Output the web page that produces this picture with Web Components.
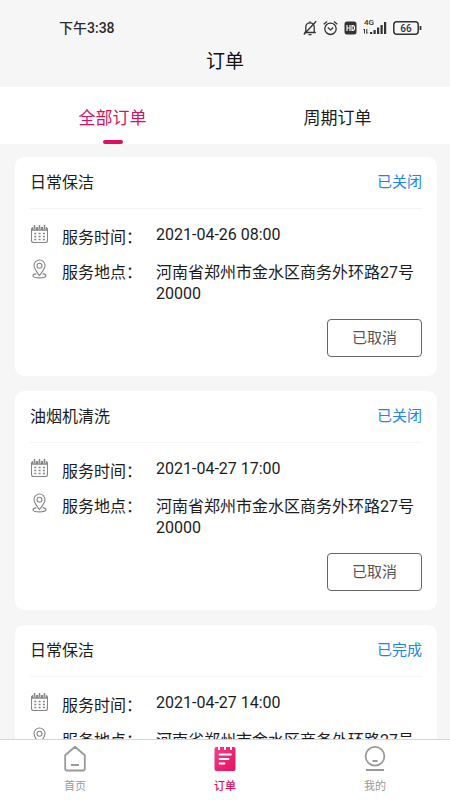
<!DOCTYPE html>
<html lang="zh-CN">
<head>
<meta charset="utf-8">
<meta name="viewport" content="width=device-width, initial-scale=1">
<title>订单</title>
<style>
  html, body { margin: 0; height: 100%; }
  body {
    --accent: #dc0f60;
    --link: #2086ec;
    --page: #f6f6f6;
    font-family: Roboto, "Noto Sans CJK SC", sans-serif;
    font-size: 16px;
    line-height: 21px;
    color: #1c1c1c;
    background: var(--page);
  }
</style>
</head>
<body>
<order-app>
  <status-bar slot="top" time="下午3:38" battery="66"></status-bar>
  <page-title slot="top">订单</page-title>
  <tab-bar slot="top">
    <tab-item active>全部订单</tab-item>
    <tab-item>周期订单</tab-item>
  </tab-bar>

  <order-card name="日常保洁" status="已关闭" time="2021-04-26 08:00">
    河南省郑州市金水区商务外环路27号 20000
    <outline-button slot="action">已取消</outline-button>
  </order-card>
  <order-card name="油烟机清洗" status="已关闭" time="2021-04-27 17:00">
    河南省郑州市金水区商务外环路27号 20000
    <outline-button slot="action">已取消</outline-button>
  </order-card>
  <order-card name="日常保洁" status="已完成" time="2021-04-27 14:00">
    河南省郑州市金水区商务外环路27号 20000
  </order-card>

  <nav-bar slot="bottom">
    <nav-item icon="home">首页</nav-item>
    <nav-item icon="order" active>订单</nav-item>
    <nav-item icon="mine">我的</nav-item>
  </nav-bar>
</order-app>

<script>
const define = (name, render) => customElements.define(name, class extends HTMLElement {
  connectedCallback() {
    if (this.shadowRoot) return;
    const template = document.createElement('template');
    template.innerHTML = render(this);
    this.attachShadow({ mode: 'open' }).append(template.content.cloneNode(true));
  }
});

define('order-app', () => `
  <style>
    :host { display: flex; flex-direction: column; height: 100vh; }
    main {
      flex: 1; min-height: 0; overflow-y: auto; scrollbar-width: none;
      display: flex; flex-direction: column; gap: 15px;
      padding: 13px 13px 15px 15px;
    }
  </style>
  <header><slot name="top"></slot></header>
  <main><slot></slot></main>
  <slot name="bottom"></slot>`);

define('status-bar', el => `
  <style>
    :host {
      display: flex; align-items: center; justify-content: space-between;
      height: 40px; padding: 8px 28px 0 59px;
      font-size: 14px; font-weight: 500; color: #2b2b2b;
    }
    .icons { display: flex; align-items: center; gap: 6px; }
    svg { display: block; fill: none; stroke: #333; stroke-width: 1.3; }
    .hd, .level { stroke: none; fill: #333; }
    .knockout { stroke: var(--page); }
    text { stroke: none; fill: #333; font-weight: 500; }
  </style>
  <time>${el.getAttribute('time')}</time>
  <div class="icons">
    <svg width="14" height="16" viewBox="0 0 14 16">
      <path d="M1.200 12.500h11.600M2.800 12.300V7a4.200 4.200 0 0 1 8.400 0v5.300M7 1.300V3M5.500 14.600h3M.8 14.500L13.200 1.300"/>
    </svg>
    <svg width="15" height="16" viewBox="0 0 15 16">
      <circle cx="7.5" cy="8.8" r="5.700"/>
      <path d="M4.8 7.6l2.7 2.3 2.7-2.3M.7 4.2L4 1.6M14.3 4.2L11 1.6"/>
    </svg>
    <svg width="13" height="14" viewBox="0 0 13 14">
      <rect class="hd" x=".5" y=".5" width="12" height="13" rx="2.5"/>
      <path class="knockout" stroke-width="1.2" d="M3 4v6M6 4v6M3 7h3M8 4.6v4.8h.8q1.700 0 1.700-2.400T8.800 4.600z"/>
    </svg>
    <svg width="24" height="18" viewBox="0 0 24 18">
      <text x="1" y="6" font-size="8">4G</text>
      <path stroke-width="1" d="M1.500 14.500V10M.5 11l1-1M3.800 10v4.500M4.800 13.500l-1 1"/>
      <path class="level" d="M7 13h2.200v2H7zM10.500 11h2.200v4h-2.200zM14 8.500h2.200V15H14zM17.500 6h2.200v9h-2.200zM21 3h2.200v12H21z"/>
    </svg>
    <svg width="29" height="14" viewBox="0 0 29 14">
      <rect x=".8" y=".8" width="24.400" height="12.400" rx="3" stroke-width="1.500"/>
      <path stroke-width="1.800" d="M27.500 5v4"/>
      <text x="13" y="10.500" font-size="10" text-anchor="middle">${el.getAttribute('battery')}</text>
    </svg>
  </div>`);

define('page-title', () => `
  <style>
    :host { display: block; padding: 1px 0 12px; }
    h1 { margin: 0; font-size: 19px; line-height: 26px; font-weight: 400; text-align: center; color: #111; }
  </style>
  <h1><slot></slot></h1>`);

define('tab-bar', () => `
  <style>
    :host { display: block; background: #fff; }
    nav { display: flex; }
  </style>
  <nav><slot></slot></nav>`);

define('tab-item', el => `
  <style>
    :host { flex: 1; display: flex; }
    button {
      flex: 1; display: flex; flex-direction: column; align-items: center; gap: 9px;
      border: 0; padding: 19px 0 0; background: none; cursor: pointer;
      font: inherit; font-size: 17px; line-height: 25px; color: inherit;
    }
    i { width: 20px; height: 4px; border-radius: 2px; }
    :host([active]) button { color: var(--accent); }
    :host([active]) i { background: var(--accent); }
  </style>
  <button type="button" aria-pressed="${el.hasAttribute('active')}"><slot></slot><i></i></button>`);

define('order-card', el => `
  <style>
    :host { display: block; flex: none; padding: 0 15px 19px; border-radius: 9px; background: #fff; }
    header {
      display: flex; align-items: center; justify-content: space-between;
      height: 51px; border-bottom: 1px solid #f4f4f4;
    }
    h2 { margin: 0; font-size: 16px; font-weight: 400; }
    .status { font-size: 15px; color: var(--link); }
    dl {
      display: grid; grid-template-columns: 32px 94px 1fr; row-gap: 14px;
      margin: 0; padding: 15px 0;
    }
    dd { margin: 0; }
    .when { padding-top: 3px; }
    svg { display: block; fill: none; stroke: #868686; stroke-width: 1.1; }
    .cal { margin: 1px 0 0 1px; }
    .pin { margin: -3px 0 0 2px; }
  </style>
  <article>
    <header><h2>${el.getAttribute('name')}</h2><span class="status">${el.getAttribute('status')}</span></header>
    <dl>
      <svg class="cal" width="17" height="18" viewBox="0 0 17 18" aria-hidden="true">
        <path d="M2.500 2.500h12a2 2 0 0 1 2 2V15.500a2 2 0 0 1-2 2h-12a2 2 0 0 1-2-2V4.500a2 2 0 0 1 2-2z"/>
        <path fill="#868686" stroke="none" d="M.5 5.800V4.300a2 2 0 0 1 2-2h12a2 2 0 0 1 2 2v1.500z"/>
        <path stroke="#fff" stroke-width="2.600" d="M3.500 0v4.200M8.500 0v4.200M13.500 0v4.200"/>
        <path stroke-width="1.500" d="M3.500 0v4M8.500 0v4M13.500 0v4"/>
        <path stroke-width="1.700" stroke-dasharray="2 2.300" d="M3.300 8.500h10.600M3.300 11.500h10.600M3.300 14.500h10.600"/>
      </svg>
      <dt class="when">服务时间：</dt><dd>${el.getAttribute('time')}</dd>
      <svg class="pin" width="15" height="20" viewBox="0 0 15 20" aria-hidden="true">
        <path d="M7.500 16.500C4.500 12.500 2 9.800 2 6.500a5.500 5.500 0 0 1 11 0c0 3.300-2.500 6-5.500 10z"/>
        <circle cx="7.500" cy="6.700" r="2.500"/>
        <path d="M4.300 14.600C2.500 15 1 15.700 1 16.700c0 1.300 3 2.200 6.500 2.200s6.500-.9 6.500-2.200c0-1-1.500-1.700-3.300-2.100"/>
      </svg>
      <dt>服务地点：</dt><dd><slot></slot></dd>
    </dl>
    <slot name="action"></slot>
  </article>`);

define('outline-button', () => `
  <style>
    :host { display: flex; justify-content: flex-end; }
    button {
      border: 1px solid #666; border-radius: 4px; padding: 8px 24px; background: #fff; cursor: pointer;
      font: inherit; font-size: 15px; line-height: 20px; color: #555;
    }
  </style>
  <button type="button"><slot></slot></button>`);

define('nav-bar', () => `
  <style>
    :host { display: block; flex: none; background: #fff; border-top: 1px solid #d6d6d6; }
    nav { display: flex; }
  </style>
  <nav><slot></slot></nav>`);

const navIcons = {
  home: `<path d="M2.200 10.200L12 1.700l9.800 8.500V24a1.500 1.500 0 0 1-1.500 1.500H3.700A1.500 1.500 0 0 1 2.200 24zM8 20h8"/>`,
  order: `<defs><linearGradient id="g" x1="0" y1="0" x2="1" y2="1"><stop offset="0" stop-color="#fb3c8a"/><stop offset="1" stop-color="#e20f62"/></linearGradient></defs>
    <path fill="url(#g)" stroke="none" d="M3.500 2H5v3h2V2h4v3h2V2h4v3h2V2h1.500a2 2 0 0 1 2 2v20a2 2 0 0 1-2 2h-17a2 2 0 0 1-2-2V4a2 2 0 0 1 2-2z"/>
    <path style="stroke:#fff" stroke-linecap="round" d="M6.500 9.500h11.500M6.500 14h9M6.500 18.500h5"/>`,
  mine: `<circle cx="12" cy="11.200" r="9.400"/><path d="M9.500 16h5M3 25h18"/>`
};

define('nav-item', el => `
  <style>
    :host { flex: 1; color: #999; }
    a {
      display: flex; flex-direction: column; align-items: center; gap: 5px;
      padding: 5px 0 4px; font-size: 11px; line-height: 18px; color: inherit; text-decoration: none;
    }
    svg { display: block; fill: none; stroke: currentColor; stroke-width: 1.8; stroke-linejoin: round; }
    :host([active]) { color: var(--accent); font-weight: 500; }
  </style>
  <a href="#${el.getAttribute('icon')}">
    <svg width="24" height="28" viewBox="0 0 24 28" aria-hidden="true">${navIcons[el.getAttribute('icon')]}</svg>
    <slot></slot>
  </a>`);
</script>
</body>
</html>
